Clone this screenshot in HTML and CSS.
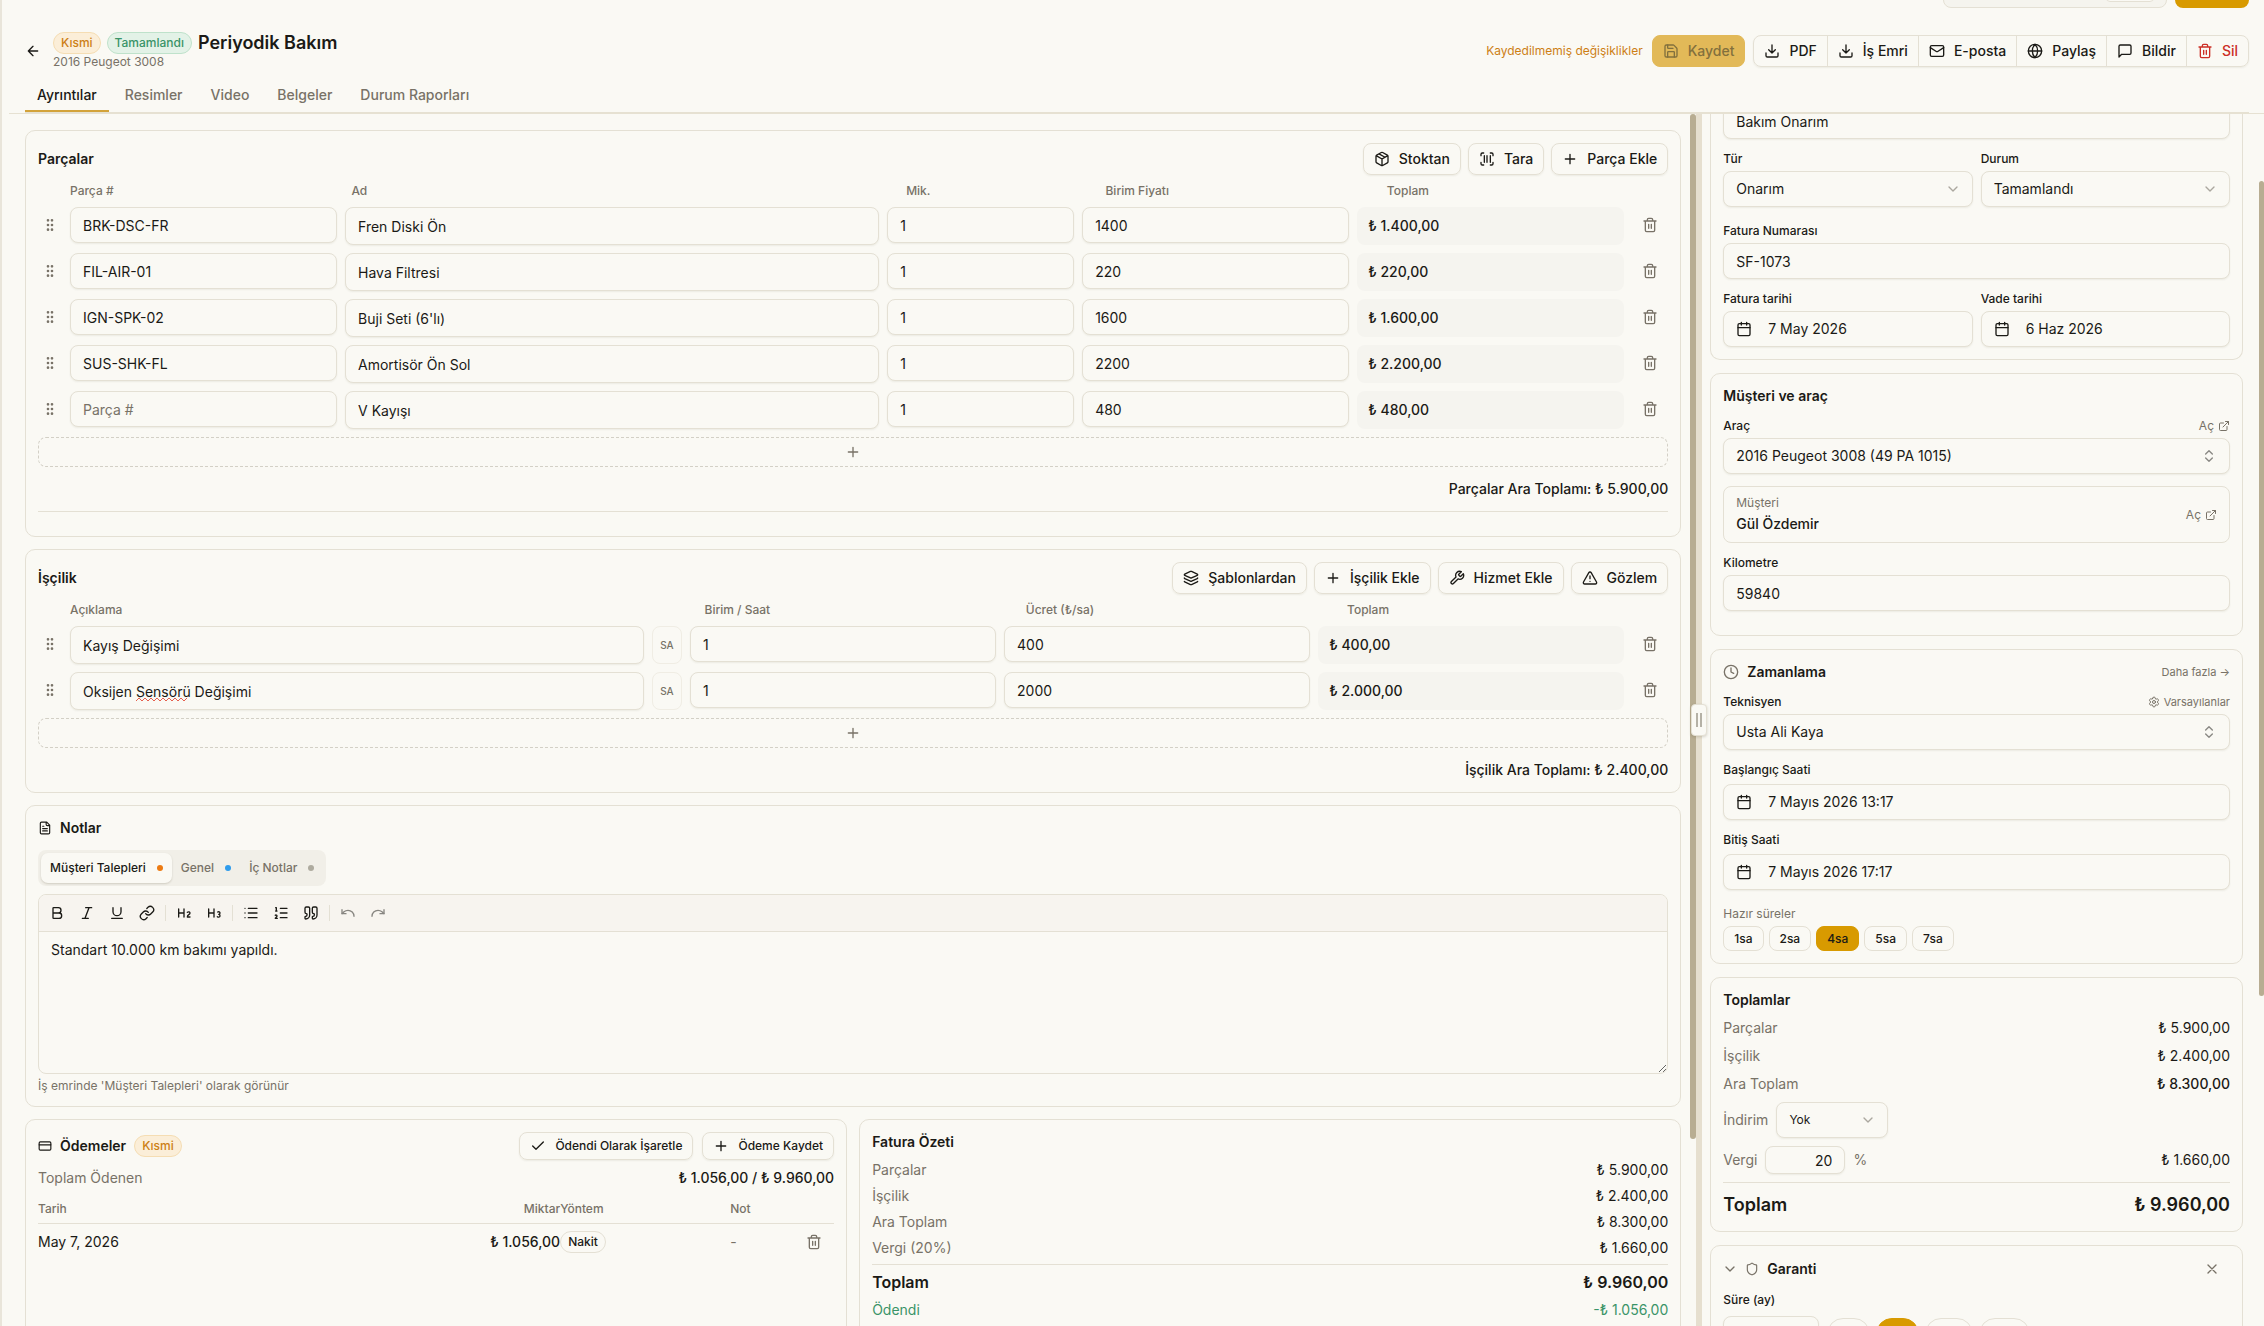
FILE: index.html
```html
<!DOCTYPE html>
<html lang="tr">
<head>
    <meta charset="UTF-8">
    <meta name="viewport" content="width=device-width, initial-scale=1.0">
    <title>Periyodik Bakım</title>
    <link rel="stylesheet" href="styles.css">
</head>
<body>
    <!-- Icon sprite -->
    <svg class="sprite" aria-hidden="true">
        <symbol id="arrow-left" viewBox="0 0 24 24"><path d="m12 19-7-7 7-7M19 12H5"/></symbol>
        <symbol id="save" viewBox="0 0 24 24"><path d="M15.2 3a2 2 0 0 1 1.4.6l3.8 3.8a2 2 0 0 1 .6 1.4V19a2 2 0 0 1-2 2H5a2 2 0 0 1-2-2V5a2 2 0 0 1 2-2z"/><path d="M17 21v-7a1 1 0 0 0-1-1H8a1 1 0 0 0-1 1v7M7 3v4a1 1 0 0 0 1 1h7"/></symbol>
        <symbol id="download" viewBox="0 0 24 24"><path d="M12 15V3M21 15v4a2 2 0 0 1-2 2H5a2 2 0 0 1-2-2v-4M7 10l5 5 5-5"/></symbol>
        <symbol id="mail" viewBox="0 0 24 24"><rect x="2" y="4" width="20" height="16" rx="2"/><path d="m22 7-8.97 5.7a1.94 1.94 0 0 1-2.06 0L2 7"/></symbol>
        <symbol id="globe" viewBox="0 0 24 24"><circle cx="12" cy="12" r="10"/><path d="M12 2a14.5 14.5 0 0 0 0 20 14.5 14.5 0 0 0 0-20M2 12h20"/></symbol>
        <symbol id="message" viewBox="0 0 24 24"><path d="M21 15a2 2 0 0 1-2 2H7l-4 4V5a2 2 0 0 1 2-2h14a2 2 0 0 1 2 2z"/></symbol>
        <symbol id="trash" viewBox="0 0 24 24"><path d="M3 6h18M19 6v14a2 2 0 0 1-2 2H7a2 2 0 0 1-2-2V6M8 6V4a2 2 0 0 1 2-2h4a2 2 0 0 1 2 2v2M10 11v6M14 11v6"/></symbol>
        <symbol id="package" viewBox="0 0 24 24"><path d="m7.5 4.27 9 5.15M21 8a2 2 0 0 0-1-1.73l-7-4a2 2 0 0 0-2 0l-7 4A2 2 0 0 0 3 8v8a2 2 0 0 0 1 1.73l7 4a2 2 0 0 0 2 0l7-4A2 2 0 0 0 21 16ZM3.3 7l8.7 5 8.7-5M12 22V12"/></symbol>
        <symbol id="scan" viewBox="0 0 24 24"><path d="M3 7V5a2 2 0 0 1 2-2h2M17 3h2a2 2 0 0 1 2 2v2M21 17v2a2 2 0 0 1-2 2h-2M7 21H5a2 2 0 0 1-2-2v-2M8 7v10M12 7v10M17 7v10"/></symbol>
        <symbol id="plus" viewBox="0 0 24 24"><path d="M5 12h14M12 5v14"/></symbol>
        <symbol id="layers" viewBox="0 0 24 24"><path d="m12.83 2.18a2 2 0 0 0-1.66 0L2.6 6.08a1 1 0 0 0 0 1.83l8.58 3.91a2 2 0 0 0 1.66 0l8.58-3.9a1 1 0 0 0 0-1.83ZM2 12a1 1 0 0 0 .58.91l8.6 3.91a2 2 0 0 0 1.65 0l8.58-3.9A1 1 0 0 0 22 12M2 17a1 1 0 0 0 .58.91l8.6 3.91a2 2 0 0 0 1.65 0l8.58-3.9A1 1 0 0 0 22 17"/></symbol>
        <symbol id="wrench" viewBox="0 0 24 24"><path d="M14.7 6.3a1 1 0 0 0 0 1.4l1.6 1.6a1 1 0 0 0 1.4 0l3.77-3.77a6 6 0 0 1-7.94 7.94l-6.91 6.91a2.12 2.12 0 0 1-3-3l6.91-6.91a6 6 0 0 1 7.94-7.94l-3.76 3.76z"/></symbol>
        <symbol id="alert" viewBox="0 0 24 24"><path d="m21.73 18-8-14a2 2 0 0 0-3.48 0l-8 14A2 2 0 0 0 4 21h16a2 2 0 0 0 1.73-3M12 9v4M12 17h.01"/></symbol>
        <symbol id="grip" viewBox="0 0 24 24"><circle cx="9" cy="12" r="1"/><circle cx="9" cy="5" r="1"/><circle cx="9" cy="19" r="1"/><circle cx="15" cy="12" r="1"/><circle cx="15" cy="5" r="1"/><circle cx="15" cy="19" r="1"/></symbol>
        <symbol id="file" viewBox="0 0 24 24"><path d="M15 2H6a2 2 0 0 0-2 2v16a2 2 0 0 0 2 2h12a2 2 0 0 0 2-2V7ZM14 2v4a2 2 0 0 0 2 2h4M10 9H8M16 13H8M16 17H8"/></symbol>
        <symbol id="bold" viewBox="0 0 24 24"><path d="M6 12h9a4 4 0 0 1 0 8H7a1 1 0 0 1-1-1V5a1 1 0 0 1 1-1h7a4 4 0 0 1 0 8"/></symbol>
        <symbol id="italic" viewBox="0 0 24 24"><path d="M19 4h-9M14 20H5M15 4 9 20"/></symbol>
        <symbol id="underline" viewBox="0 0 24 24"><path d="M6 4v6a6 6 0 0 0 12 0V4M4 20h16"/></symbol>
        <symbol id="link" viewBox="0 0 24 24"><path d="M10 13a5 5 0 0 0 7.54.54l3-3a5 5 0 0 0-7.07-7.07l-1.72 1.71"/><path d="M14 11a5 5 0 0 0-7.54-.54l-3 3a5 5 0 0 0 7.07 7.07l1.71-1.71"/></symbol>
        <symbol id="h2" viewBox="0 0 24 24"><path d="M4 12h8M4 18V6M12 18V6M21 18h-4c0-4 4-3 4-6 0-1.500-2-2.500-4-1"/></symbol>
        <symbol id="h3" viewBox="0 0 24 24"><path d="M4 12h8M4 18V6M12 18V6M17.500 10.500c1.700-1 3.500 0 3.500 1.500a2 2 0 0 1-2 2M17 17.500c2 1.500 4 .3 4-1.500a2 2 0 0 0-2-2"/></symbol>
        <symbol id="list" viewBox="0 0 24 24"><path d="M3 5h.01M3 12h.01M3 19h.01M8 5h13M8 12h13M8 19h13"/></symbol>
        <symbol id="list-ordered" viewBox="0 0 24 24"><path d="M11 5h10M11 12h10M11 19h10M4 4h1v5M4 9h2M6.500 20H3.400c0-1 2.600-1.925 2.600-3.500a1.500 1.500 0 0 0-2.600-1.020"/></symbol>
        <symbol id="quote" viewBox="0 0 24 24"><path d="M16 3a2 2 0 0 0-2 2v6a2 2 0 0 0 2 2 1 1 0 0 1 1 1v1a2 2 0 0 1-2 2 1 1 0 0 0-1 1v2a1 1 0 0 0 1 1 6 6 0 0 0 6-6V5a2 2 0 0 0-2-2zM5 3a2 2 0 0 0-2 2v6a2 2 0 0 0 2 2 1 1 0 0 1 1 1v1a2 2 0 0 1-2 2 1 1 0 0 0-1 1v2a1 1 0 0 0 1 1 6 6 0 0 0 6-6V5a2 2 0 0 0-2-2z"/></symbol>
        <symbol id="undo" viewBox="0 0 24 24"><path d="M3 7v6h6"/><path d="M21 17a9 9 0 0 0-9-9 9 9 0 0 0-6 2.300L3 13"/></symbol>
        <symbol id="redo" viewBox="0 0 24 24"><path d="M21 7v6h-6"/><path d="M3 17a9 9 0 0 1 9-9 9 9 0 0 1 6 2.300l3 2.700"/></symbol>
        <symbol id="card" viewBox="0 0 24 24"><rect x="2" y="5" width="20" height="14" rx="2"/><path d="M2 10h20"/></symbol>
        <symbol id="check" viewBox="0 0 24 24"><path d="M20 6 9 17l-5-5"/></symbol>
        <symbol id="chevron-down" viewBox="0 0 24 24"><path d="m6 9 6 6 6-6"/></symbol>
        <symbol id="chevrons" viewBox="0 0 24 24"><path d="m7 15 5 5 5-5M7 9l5-5 5 5"/></symbol>
        <symbol id="calendar" viewBox="0 0 24 24"><path d="M8 2v4M16 2v4M3 10h18"/><rect x="3" y="4" width="18" height="18" rx="2"/></symbol>
        <symbol id="external" viewBox="0 0 24 24"><path d="M15 3h6v6M10 14 21 3M18 13v6a2 2 0 0 1-2 2H5a2 2 0 0 1-2-2V8a2 2 0 0 1 2-2h6"/></symbol>
        <symbol id="clock" viewBox="0 0 24 24"><circle cx="12" cy="12" r="10"/><path d="M12 6v6l4 2"/></symbol>
        <symbol id="settings" viewBox="0 0 24 24"><path d="M9.671 4.136a2.340 2.340 0 0 1 4.659 0 2.340 2.340 0 0 0 3.319 1.915 2.340 2.340 0 0 1 2.330 4.033 2.340 2.340 0 0 0 0 3.831 2.340 2.340 0 0 1-2.330 4.033 2.340 2.340 0 0 0-3.319 1.915 2.340 2.340 0 0 1-4.659 0 2.340 2.340 0 0 0-3.320-1.915 2.340 2.340 0 0 1-2.330-4.033 2.340 2.340 0 0 0 0-3.831A2.340 2.340 0 0 1 6.350 6.051a2.340 2.340 0 0 0 3.319-1.915"/><circle cx="12" cy="12" r="3"/></symbol>
        <symbol id="shield" viewBox="0 0 24 24"><path d="M20 13c0 5-3.500 7.500-7.660 8.950a1 1 0 0 1-.67-.01C7.500 20.500 4 18 4 13V6a1 1 0 0 1 1-1c2 0 4.500-1.200 6.240-2.720a1.170 1.170 0 0 1 1.520 0C14.510 3.810 17 5 19 5a1 1 0 0 1 1 1z"/></symbol>
        <symbol id="close" viewBox="0 0 24 24"><path d="M18 6 6 18M6 6l12 12"/></symbol>
    </svg>

    <div class="app">
        <div class="topbar">
            <div class="search"><span class="shortcut"></span></div>
            <div class="new-button"></div>
        </div>

        <header class="page-header">
            <div class="title-row">
                <a class="back" href="#" aria-label="Geri"><svg class="icon"><use href="#arrow-left"/></svg></a>
                <div class="heading">
                    <div class="heading-line">
                        <span class="badge badge-amber">Kısmi</span>
                        <span class="badge badge-green">Tamamlandı</span>
                        <h1>Periyodik Bakım</h1>
                    </div>
                    <p class="subtitle">2016 Peugeot 3008</p>
                </div>
                <span class="unsaved">Kaydedilmemiş değişiklikler</span>
                <button class="btn btn-save" disabled><svg class="icon"><use href="#save"/></svg>Kaydet</button>
                <div class="button-group">
                    <button><svg class="icon"><use href="#download"/></svg>PDF</button>
                    <button><svg class="icon"><use href="#download"/></svg>İş Emri</button>
                    <button><svg class="icon"><use href="#mail"/></svg>E-posta</button>
                    <button><svg class="icon"><use href="#globe"/></svg>Paylaş</button>
                    <button><svg class="icon"><use href="#message"/></svg>Bildir</button>
                    <button class="danger"><svg class="icon"><use href="#trash"/></svg>Sil</button>
                </div>
            </div>
            <nav class="tabs">
                <a class="active" href="#">Ayrıntılar</a>
                <a href="#">Resimler</a>
                <a href="#">Video</a>
                <a href="#">Belgeler</a>
                <a href="#">Durum Raporları</a>
            </nav>
        </header>

        <div class="panes">
            <main class="pane-main">
                <section class="card">
                    <div class="card-head">
                        <h2>Parçalar</h2>
                        <button class="btn"><svg class="icon"><use href="#package"/></svg>Stoktan</button>
                        <button class="btn"><svg class="icon"><use href="#scan"/></svg>Tara</button>
                        <button class="btn"><svg class="icon"><use href="#plus"/></svg>Parça Ekle</button>
                    </div>
                    <div class="grid-head parts-head">
                        <span></span><span>Parça #</span><span>Ad</span><span>Mik.</span><span>Birim Fiyatı</span><span>Toplam</span>
                    </div>
                    <div class="rows" id="part-rows"></div>
                    <button class="add-row" aria-label="Parça ekle"><svg class="icon"><use href="#plus"/></svg></button>
                    <p class="subtotal">Parçalar Ara Toplamı: ₺ 5.900,00</p>
                    <hr>
                </section>

                <section class="card">
                    <div class="card-head">
                        <h2>İşçilik</h2>
                        <button class="btn"><svg class="icon"><use href="#layers"/></svg>Şablonlardan</button>
                        <button class="btn"><svg class="icon"><use href="#plus"/></svg>İşçilik Ekle</button>
                        <button class="btn"><svg class="icon"><use href="#wrench"/></svg>Hizmet Ekle</button>
                        <button class="btn"><svg class="icon"><use href="#alert"/></svg>Gözlem</button>
                    </div>
                    <div class="grid-head labor-head">
                        <span></span><span>Açıklama</span><span>Birim / Saat</span><span>Ücret (₺/sa)</span><span>Toplam</span>
                    </div>
                    <div class="rows" id="labor-rows"></div>
                    <button class="add-row" aria-label="İşçilik ekle"><svg class="icon"><use href="#plus"/></svg></button>
                    <p class="subtotal">İşçilik Ara Toplamı: ₺ 2.400,00</p>
                </section>

                <section class="card">
                    <h2 class="with-icon"><svg class="icon"><use href="#file"/></svg>Notlar</h2>
                    <div class="note-tabs">
                        <button class="active">Müşteri Talepleri<i class="dot orange"></i></button>
                        <button>Genel<i class="dot blue"></i></button>
                        <button>İç Notlar<i class="dot gray"></i></button>
                    </div>
                    <div class="editor">
                        <div class="toolbar">
                            <button aria-label="Kalın"><svg class="icon"><use href="#bold"/></svg></button>
                            <button aria-label="İtalik"><svg class="icon"><use href="#italic"/></svg></button>
                            <button aria-label="Altı çizili"><svg class="icon"><use href="#underline"/></svg></button>
                            <button aria-label="Bağlantı"><svg class="icon"><use href="#link"/></svg></button>
                            <i class="sep"></i>
                            <button aria-label="Başlık 2"><svg class="icon"><use href="#h2"/></svg></button>
                            <button aria-label="Başlık 3"><svg class="icon"><use href="#h3"/></svg></button>
                            <i class="sep"></i>
                            <button aria-label="Liste"><svg class="icon"><use href="#list"/></svg></button>
                            <button aria-label="Numaralı liste"><svg class="icon"><use href="#list-ordered"/></svg></button>
                            <button aria-label="Alıntı"><svg class="icon"><use href="#quote"/></svg></button>
                            <i class="sep"></i>
                            <button aria-label="Geri al" disabled><svg class="icon"><use href="#undo"/></svg></button>
                            <button aria-label="Yinele" disabled><svg class="icon"><use href="#redo"/></svg></button>
                        </div>
                        <textarea aria-label="Müşteri talepleri">Standart 10.000 km bakımı yapıldı.</textarea>
                    </div>
                    <p class="hint">İş emrinde 'Müşteri Talepleri' olarak görünür</p>
                </section>

                <div class="bottom-cards">
                    <section class="card">
                        <div class="card-head payments-head">
                            <h2 class="with-icon"><svg class="icon"><use href="#card"/></svg>Ödemeler <span class="badge badge-amber">Kısmi</span></h2>
                            <button class="btn btn-small"><svg class="icon"><use href="#check"/></svg>Ödendi Olarak İşaretle</button>
                            <button class="btn btn-small"><svg class="icon"><use href="#plus"/></svg>Ödeme Kaydet</button>
                        </div>
                        <div class="line paid-line"><span>Toplam Ödenen</span><b>₺ 1.056,00 / ₺ 9.960,00</b></div>
                        <table class="payments">
                            <thead>
                                <tr><th>Tarih</th><th class="amount">Miktar</th><th class="method">Yöntem</th><th class="note">Not</th><th class="action"></th></tr>
                            </thead>
                            <tbody>
                                <tr>
                                    <td>May 7, 2026</td>
                                    <td class="amount">₺ 1.056,00</td>
                                    <td class="method"><span class="badge">Nakit</span></td>
                                    <td class="note">-</td>
                                    <td class="action"><button class="icon-button" aria-label="Ödemeyi sil"><svg class="icon"><use href="#trash"/></svg></button></td>
                                </tr>
                            </tbody>
                        </table>
                    </section>

                    <section class="card summary">
                        <h2>Fatura Özeti</h2>
                        <div class="line"><span>Parçalar</span><b>₺ 5.900,00</b></div>
                        <div class="line"><span>İşçilik</span><b>₺ 2.400,00</b></div>
                        <div class="line"><span>Ara Toplam</span><b>₺ 8.300,00</b></div>
                        <div class="line"><span>Vergi (20%)</span><b>₺ 1.660,00</b></div>
                        <div class="line total"><span>Toplam</span><b>₺ 9.960,00</b></div>
                        <div class="line paid"><span>Ödendi</span><b>-₺ 1.056,00</b></div>
                    </section>
                </div>
                <div class="scroll-thumb main-thumb"></div>
            </main>

            <div class="divider"><span class="handle"></span></div>

            <aside class="pane-side">
                <section class="card scrolled">
                    <input class="input" aria-label="Başlık" value="Bakım Onarım">
                    <div class="two-col">
                        <div class="field">
                            <label for="type">Tür</label>
                            <span class="select"><select class="input" id="type"><option>Onarım</option></select><svg class="icon"><use href="#chevron-down"/></svg></span>
                        </div>
                        <div class="field">
                            <label for="status">Durum</label>
                            <span class="select"><select class="input" id="status"><option>Tamamlandı</option></select><svg class="icon"><use href="#chevron-down"/></svg></span>
                        </div>
                    </div>
                    <div class="field invoice-number">
                        <label for="invoice">Fatura Numarası</label>
                        <input class="input" id="invoice" value="SF-1073">
                    </div>
                    <div class="two-col">
                        <div class="field">
                            <label for="invoice-date">Fatura tarihi</label>
                            <button class="input date" id="invoice-date"><svg class="icon"><use href="#calendar"/></svg>7 May 2026</button>
                        </div>
                        <div class="field">
                            <label for="due-date">Vade tarihi</label>
                            <button class="input date" id="due-date"><svg class="icon"><use href="#calendar"/></svg>6 Haz 2026</button>
                        </div>
                    </div>
                </section>

                <section class="card customer">
                    <h2>Müşteri ve araç</h2>
                    <div class="field">
                        <div class="label-row"><label for="vehicle">Araç</label><a class="open-link" href="#">Aç<svg class="icon"><use href="#external"/></svg></a></div>
                        <button class="input combo" id="vehicle">2016 Peugeot 3008 (49 PA 1015)<svg class="icon"><use href="#chevrons"/></svg></button>
                    </div>
                    <div class="customer-box">
                        <div><small>Müşteri</small><strong>Gül Özdemir</strong></div>
                        <a class="open-link" href="#">Aç<svg class="icon"><use href="#external"/></svg></a>
                    </div>
                    <div class="field">
                        <label for="km">Kilometre</label>
                        <input class="input" id="km" value="59840">
                    </div>
                </section>

                <section class="card schedule">
                    <div class="label-row">
                        <h2 class="with-icon"><svg class="icon"><use href="#clock"/></svg>Zamanlama</h2>
                        <a class="small-link" href="#">Daha fazla →</a>
                    </div>
                    <div class="field">
                        <div class="label-row"><label for="tech">Teknisyen</label><a class="small-link" href="#"><svg class="icon"><use href="#settings"/></svg>Varsayılanlar</a></div>
                        <button class="input combo" id="tech">Usta Ali Kaya<svg class="icon"><use href="#chevrons"/></svg></button>
                    </div>
                    <div class="field time">
                        <label for="start">Başlangıç Saati</label>
                        <button class="input date" id="start"><svg class="icon"><use href="#calendar"/></svg>7 Mayıs 2026 13:17</button>
                    </div>
                    <div class="field time">
                        <label for="end">Bitiş Saati</label>
                        <button class="input date" id="end"><svg class="icon"><use href="#calendar"/></svg>7 Mayıs 2026 17:17</button>
                    </div>
                    <div class="presets">
                        <span>Hazır süreler</span>
                        <div class="chips">
                            <button>1sa</button><button>2sa</button><button class="active">4sa</button><button>5sa</button><button>7sa</button>
                        </div>
                    </div>
                </section>

                <section class="card totals">
                    <h2>Toplamlar</h2>
                    <div class="line"><span>Parçalar</span><b>₺ 5.900,00</b></div>
                    <div class="line"><span>İşçilik</span><b>₺ 2.400,00</b></div>
                    <div class="line"><span>Ara Toplam</span><b class="medium">₺ 8.300,00</b></div>
                    <div class="line">
                        <label for="discount">İndirim</label>
                        <span class="select discount"><select class="input" id="discount"><option>Yok</option></select><svg class="icon"><use href="#chevron-down"/></svg></span>
                    </div>
                    <div class="line">
                        <label for="tax">Vergi</label>
                        <input class="input tax" id="tax" value="20">
                        <span>%</span>
                        <b>₺ 1.660,00</b>
                    </div>
                    <div class="line total"><span>Toplam</span><b>₺ 9.960,00</b></div>
                </section>

                <section class="card warranty">
                    <div class="warranty-head">
                        <button class="icon-button" aria-label="Daralt"><svg class="icon"><use href="#chevron-down"/></svg></button>
                        <h2 class="with-icon"><svg class="icon"><use href="#shield"/></svg>Garanti</h2>
                        <button class="icon-button remove" aria-label="Kaldır"><svg class="icon"><use href="#close"/></svg></button>
                    </div>
                    <div class="field">
                        <label for="months">Süre (ay)</label>
                        <div class="months">
                            <input class="input" id="months" value="6">
                            <div class="chips pills">
                                <button>3ay</button><button class="active">6ay</button><button>12ay</button><button>24ay</button>
                            </div>
                        </div>
                    </div>
                </section>
            </aside>
        </div>
        <div class="scroll-thumb page-thumb"></div>
    </div>

    <script>
        const parts = [
            { code: 'BRK-DSC-FR', name: 'Fren Diski Ön', qty: 1, price: 1400, total: '1.400,00' },
            { code: 'FIL-AIR-01', name: 'Hava Filtresi', qty: 1, price: 220, total: '220,00' },
            { code: 'IGN-SPK-02', name: "Buji Seti (6'lı)", qty: 1, price: 1600, total: '1.600,00' },
            { code: 'SUS-SHK-FL', name: 'Amortisör Ön Sol', qty: 1, price: 2200, total: '2.200,00' },
            { code: '', name: 'V Kayışı', qty: 1, price: 480, total: '480,00' },
        ];

        const labor = [
            { name: 'Kayış Değişimi', hours: 1, rate: 400, total: '400,00' },
            { name: 'Oksijen Sensörü Değişimi', hours: 1, rate: 2000, total: '2.000,00', misspelled: true },
        ];

        const grip = '<span class="grip"><svg class="icon"><use href="#grip"/></svg></span>';
        const remove = '<button class="icon-button" aria-label="Satırı sil"><svg class="icon"><use href="#trash"/></svg></button>';

        document.getElementById('part-rows').innerHTML = parts.map((part) => `
            <div class="row part-row">
                ${grip}
                <input class="input" aria-label="Parça #" placeholder="Parça #" value="${part.code}">
                <input class="input tall" aria-label="Ad" value="${part.name}">
                <input class="input" aria-label="Mik." value="${part.qty}">
                <input class="input" aria-label="Birim Fiyatı" value="${part.price}">
                <output class="row-total">₺ ${part.total}</output>
                ${remove}
            </div>
        `).join('');

        document.getElementById('labor-rows').innerHTML = labor.map((item) => `
            <div class="row labor-row">
                ${grip}
                <div class="description">
                    <input class="input tall" aria-label="Açıklama" value="${item.name}">
                    ${item.misspelled ? '<svg class="squiggle" viewBox="0 0 54 5"><path d="M0 4l3-3 3 3 3-3 3 3 3-3 3 3 3-3 3 3 3-3 3 3 3-3 3 3 3-3 3 3 3-3 3 3 3-3"/></svg>' : ''}
                </div>
                <button class="unit">SA</button>
                <input class="input" aria-label="Birim / Saat" value="${item.hours}">
                <input class="input" aria-label="Ücret" value="${item.rate}">
                <output class="row-total">₺ ${item.total}</output>
                ${remove}
            </div>
        `).join('');
    </script>
</body>
</html>
```
FILE: styles.css
```css
* {
    box-sizing: border-box;
}
body {
    margin: 0;
    font-family: Inter, "Liberation Sans", sans-serif;
    font-size: 14px;
    line-height: 20px;
    color: #1b1a16;
    background: #faf9f4;
}
h1, h2, p {
    margin: 0;
}
h1 {
    font-size: 18px;
    line-height: 24px;
    font-weight: 600;
}
h2 {
    font-size: 14px;
    line-height: 20px;
    font-weight: 600;
}
a {
    color: inherit;
    text-decoration: none;
}
button, input, select, textarea {
    font: inherit;
    color: inherit;
}
button {
    background: none;
    border: 0;
    padding: 0;
}
hr {
    margin: 12px 0;
    border: 0;
    border-top: 1px solid #e4e0d4;
}
.sprite {
    display: none;
}
.icon {
    width: 16px;
    height: 16px;
    flex: none;
    fill: none;
    stroke: currentColor;
    stroke-width: 2;
    stroke-linecap: round;
    stroke-linejoin: round;
}

/* Shell */
.app {
    position: relative;
    display: flex;
    flex-direction: column;
    height: 100vh;
    overflow: hidden;
    padding-left: 7px;
    border-left: 2px solid #e9e5da;
}
.topbar {
    display: flex;
    align-items: flex-end;
    justify-content: flex-end;
    gap: 8px;
    height: 8px;
    padding-right: 15px;
    overflow: hidden;
}
.search {
    display: flex;
    align-items: flex-end;
    justify-content: flex-end;
    flex: none;
    width: 224px;
    height: 32px;
    padding: 0 12px 5px;
    border: 1px solid #e4e0d4;
    border-radius: 8px;
    background: #f5f4ee;
}
.shortcut {
    width: 48px;
    height: 20px;
    border: 1px solid #e4e0d4;
    border-radius: 4px;
    background: #faf9f4;
}
.new-button {
    flex: none;
    width: 74px;
    height: 32px;
    border-radius: 8px;
    background: #d89a00;
}

/* Header */
.page-header {
    flex: none;
    padding: 24px 15px 0 16px;
    border-bottom: 1px solid #e6e1d2;
}
.title-row {
    display: flex;
    align-items: center;
}
.back {
    display: flex;
    margin-right: 12px;
}
.heading {
    flex: 1;
}
.heading-line {
    display: flex;
    align-items: center;
    gap: 6px;
    height: 22px;
}
.subtitle {
    font-size: 12px;
    line-height: 16px;
    color: #787267;
}
.badge {
    display: inline-flex;
    align-items: center;
    height: 22px;
    padding: 0 7px;
    border: 1px solid #e4e0d4;
    border-radius: 11px;
    font-size: 12px;
    line-height: 16px;
    font-weight: 500;
}
.badge-amber {
    color: #cd7f14;
    background: #fbeed8;
    border-color: #f5ddb3;
}
.badge-green {
    color: #3a9468;
    background: #e3f2e7;
    border-color: #bfe2cb;
}
.unsaved {
    margin-right: 9px;
    font-size: 12px;
    color: #cd7f14;
}
.btn {
    display: flex;
    align-items: center;
    gap: 9px;
    height: 32px;
    padding: 0 10px;
    border: 1px solid #e4e0d4;
    border-radius: 8px;
    font-weight: 500;
    box-shadow: 0 1px 2px rgba(60, 50, 20, 0.07);
}
.btn-small {
    height: 28px;
    font-size: 12px;
}
.btn-save {
    margin-right: 8px;
    border-color: #e2b958;
    color: #82703d;
    background: #e2b958;
    box-shadow: none;
}
.button-group {
    display: flex;
    height: 32px;
    border: 1px solid #e4e0d4;
    border-radius: 8px;
    box-shadow: 0 1px 2px rgba(60, 50, 20, 0.07);
}
.button-group button {
    display: flex;
    align-items: center;
    gap: 9px;
    padding: 0 10px;
    font-weight: 500;
}
.button-group button + button {
    border-left: 1px solid #e4e0d4;
}
.button-group .danger {
    color: #cc2f26;
}
.tabs {
    display: flex;
    gap: 4px;
    margin-top: 8px;
    border-bottom: 1px solid #e6e1d2;
}
.tabs a {
    height: 34px;
    padding: 7px 12px 0;
    border-bottom: 2px solid transparent;
    color: #787267;
    font-weight: 500;
}
.tabs .active {
    color: #1b1a16;
    border-color: #d3a33a;
}

/* Panes */
.panes {
    display: flex;
    flex: 1;
    min-height: 0;
}
.pane-main {
    position: relative;
    display: flex;
    flex-direction: column;
    gap: 12px;
    flex: 1;
    min-width: 0;
    padding: 16px 15px 0 16px;
    overflow: hidden;
}
.pane-side {
    display: flex;
    flex-direction: column;
    gap: 13px;
    flex: none;
    width: calc(25% - 2px);
    padding: 0 21px 0 8px;
    overflow: hidden;
}
.divider {
    position: relative;
    flex: none;
    width: 6px;
    background: #e6dfcf;
}
.handle {
    position: absolute;
    top: 590px;
    left: -5px;
    z-index: 1;
    width: 16px;
    height: 32px;
    border: 1px solid #e4e0d4;
    border-radius: 4px;
    background: #faf9f4;
    box-shadow: 0 1px 3px rgba(60, 50, 20, 0.2);
}
.handle::before {
    content: "";
    position: absolute;
    inset: 8px 4px;
    border: solid #b5b1a6;
    border-width: 0 2px;
}
.scroll-thumb {
    position: absolute;
    right: 0;
    width: 6px;
    border-radius: 3px;
    background: #b8ad92;
}
.main-thumb {
    top: 0;
    height: 1025px;
}
.page-thumb {
    top: 181px;
    width: 5px;
    height: 815px;
}
.card {
    flex: none;
    padding: 12px;
    border: 1px solid #e4e0d4;
    border-radius: 10px;
}
.card-head {
    display: flex;
    align-items: center;
    gap: 7px;
}
.card-head h2 {
    flex: 1;
}
.with-icon {
    display: flex;
    align-items: center;
    gap: 8px;
}
.with-icon .icon {
    width: 14px;
    height: 14px;
}

/* Parts and labor rows */
.grid-head {
    display: grid;
    column-gap: 8px;
    margin: 8px 0;
    font-size: 12px;
    line-height: 16px;
    font-weight: 500;
    color: #787267;
}
.parts-head {
    grid-template-columns: 24px 10fr 20fr 7fr 10fr 10fr 0;
}
.labor-head {
    grid-template-columns: 24px 2fr 1fr 1fr 1fr 0;
}
.rows {
    display: grid;
    gap: 8px;
}
.row {
    display: grid;
    align-items: start;
    gap: 8px;
}
.part-row {
    grid-template-columns: 24px 10fr 20fr 7fr 10fr 10fr 36px;
}
.labor-row {
    grid-template-columns: 24px 15fr 30px 8fr 8fr 8fr 36px;
}
.input {
    width: 100%;
    height: 36px;
    padding: 0 12px;
    border: 1px solid #e4e0d4;
    border-radius: 8px;
    color: #1b1a16;
    background: #faf9f4;
    box-shadow: 0 1px 2px rgba(60, 50, 20, 0.07);
    text-align: left;
}
.input::placeholder {
    color: #787267;
}
.input.tall {
    height: 38px;
}
.grip, .icon-button {
    display: flex;
    align-items: center;
    justify-content: center;
    height: 36px;
    color: #787267;
}
.row-total {
    height: 38px;
    padding: 9px 11px;
    border-radius: 8px;
    background: #f5f4ef;
    font-weight: 500;
}
.unit {
    height: 38px;
    border: 1px solid #f0ede4;
    border-radius: 8px;
    font-size: 10px;
    font-weight: 500;
    color: #787267;
}
.description {
    position: relative;
}
.squiggle {
    position: absolute;
    top: 25px;
    left: 66px;
    width: 54px;
    height: 5px;
    fill: none;
    stroke: #e5604f;
}
.add-row {
    display: flex;
    align-items: center;
    justify-content: center;
    width: 100%;
    height: 30px;
    margin: 8px 0 12px;
    border: 1px dashed #d3d0c6;
    border-radius: 8px;
    color: #787267;
}
.subtotal {
    text-align: right;
    font-weight: 500;
}

/* Notes */
.note-tabs {
    display: inline-flex;
    height: 36px;
    margin: 12px 0 8px;
    padding: 3px;
    border-radius: 8px;
    background: #f1efe8;
    vertical-align: top;
}
.note-tabs button {
    display: flex;
    align-items: center;
    gap: 11px;
    padding: 0 9px;
    border-radius: 7px;
    font-size: 12px;
    font-weight: 500;
    color: #787267;
}
.note-tabs .active {
    color: #1b1a16;
    background: #faf9f4;
    box-shadow: 0 1px 2px rgba(60, 50, 20, 0.18);
}
.dot {
    width: 6px;
    height: 6px;
    border-radius: 3px;
}
.orange {
    background: #ec7a12;
}
.blue {
    background: #2f9cec;
}
.gray {
    background: #aeab9f;
}
.editor {
    border: 1px solid #e4e0d4;
    border-radius: 8px;
    overflow: hidden;
}
.toolbar {
    display: flex;
    align-items: center;
    gap: 2px;
    height: 37px;
    padding: 4px;
    border-bottom: 1px solid #e4e0d4;
    background: #f7f4ef;
}
.toolbar button {
    display: flex;
    align-items: center;
    justify-content: center;
    width: 28px;
    height: 28px;
}
.toolbar button:disabled {
    opacity: 0.5;
}
.sep {
    width: 1px;
    height: 16px;
    margin: 0 2px;
    background: #e4e0d4;
}
.editor textarea {
    display: block;
    width: 100%;
    height: 141px;
    padding: 8px 12px;
    border: 0;
    background: none;
    resize: vertical;
}
.hint {
    margin-top: 4px;
    font-size: 12px;
    line-height: 16px;
    color: #787267;
}

/* Payments and summary */
.bottom-cards {
    display: grid;
    grid-template-columns: 1fr 1fr;
    flex: none;
    gap: 12px;
    height: 300px;
}
.line {
    display: flex;
    align-items: center;
    gap: 8px;
    color: #787267;
}
.line b {
    margin-left: auto;
    font-weight: 400;
    color: #1b1a16;
}
.payments-head {
    gap: 9px;
}
.paid-line {
    margin-top: 8px;
}
.paid-line b, .line .medium {
    font-weight: 500;
}
.payments {
    width: 100%;
    margin-top: 8px;
    border-collapse: collapse;
}
.payments th {
    height: 27px;
    padding: 0;
    border-bottom: 1px solid #e4e0d4;
    font-size: 12px;
    font-weight: 500;
    color: #787267;
    text-align: left;
}
.payments td {
    height: 36px;
    padding: 0;
}
.payments .amount {
    text-align: right;
}
.payments td.amount {
    font-weight: 500;
}
.payments .method {
    width: 170px;
}
.payments .note {
    width: 64px;
}
.payments .action {
    width: 40px;
}
.payments .note, .payments .action {
    color: #787267;
}
.payments .icon-button {
    width: 40px;
}
.summary {
    display: flex;
    flex-direction: column;
    gap: 6px;
}
.summary h2 {
    margin-bottom: 2px;
}
.line.total {
    padding-top: 5px;
    border-top: 1px solid #e4e0d4;
    font-size: 16px;
    line-height: 24px;
    font-weight: 600;
    color: #1b1a16;
}
.line.total b {
    font-weight: 600;
}
.paid, .line.paid b {
    color: #3a9468;
}

/* Side pane */
.scrolled {
    margin-top: -11px;
    padding-top: 0;
    border-top: 0;
    border-top-left-radius: 0;
    border-top-right-radius: 0;
}
.two-col {
    display: grid;
    grid-template-columns: 1fr 1fr;
    gap: 8px;
    margin-top: 12px;
}
.field {
    display: flex;
    flex-direction: column;
    gap: 4px;
}
.field label {
    font-size: 12px;
    line-height: 16px;
    font-weight: 500;
}
.invoice-number {
    margin-top: 16px;
}
.select {
    position: relative;
    display: block;
}
.select select {
    appearance: none;
}
.select .icon {
    position: absolute;
    top: 10px;
    right: 12px;
    color: #787267;
    opacity: 0.6;
}
.date {
    display: flex;
    align-items: center;
    gap: 16px;
}
.combo {
    display: flex;
    align-items: center;
    justify-content: space-between;
}
.combo .icon {
    opacity: 0.5;
}
.label-row {
    display: flex;
    align-items: center;
    justify-content: space-between;
}
.open-link, .small-link {
    display: flex;
    align-items: center;
    gap: 4px;
    font-size: 12px;
    line-height: 16px;
    color: #787267;
}
.open-link .icon, .small-link .icon {
    width: 12px;
    height: 12px;
}
.small-link {
    font-size: 11px;
}
.customer, .schedule {
    display: flex;
    flex-direction: column;
    gap: 12px;
}
.customer {
    padding-bottom: 24px;
}
.customer-box {
    display: flex;
    align-items: center;
    justify-content: space-between;
    padding: 8px 12px;
    border: 1px solid #e4e0d4;
    border-radius: 8px;
}
.customer-box small {
    display: block;
    margin-bottom: 3px;
    font-size: 12px;
    line-height: 16px;
    color: #787267;
}
.customer-box strong {
    display: block;
    font-weight: 500;
}
.schedule .with-icon .icon {
    width: 16px;
    height: 16px;
    color: #787267;
}
.time {
    gap: 6px;
}
.presets {
    display: grid;
    gap: 4px;
    padding-top: 4px;
    font-size: 12px;
    line-height: 16px;
    color: #787267;
}
.chips {
    display: flex;
    gap: 4px;
}
.chips button {
    height: 25px;
    padding: 0 10px;
    border: 1px solid #e4e0d4;
    border-radius: 8px;
    font-size: 12px;
    font-weight: 500;
    color: #1b1a16;
}
.chips .active {
    border-color: #d89a00;
    background: #d89a00;
}
.presets .chips {
    gap: 5px;
}
.totals {
    display: flex;
    flex-direction: column;
    gap: 8px;
}
.discount {
    width: 112px;
}
.discount select {
    font-size: 12px;
}
.tax {
    width: 80px;
    height: 28px;
    text-align: right;
}
.totals .total {
    padding-top: 8px;
    font-size: 18px;
    line-height: 28px;
}
.warranty-head {
    display: flex;
    align-items: center;
    gap: 8px;
    height: 22px;
    margin-bottom: 12px;
}
.warranty-head .icon-button {
    width: 14px;
    height: 22px;
}
.warranty-head .with-icon .icon {
    color: #787267;
}
.warranty-head .remove {
    width: 36px;
    margin-left: auto;
}
.warranty .field {
    gap: 8px;
}
.months {
    display: flex;
    align-items: center;
    gap: 8px;
}
.months .input {
    width: 96px;
}
.pills {
    gap: 6px;
}
.pills button {
    height: 32px;
    border-radius: 16px;
}
```
